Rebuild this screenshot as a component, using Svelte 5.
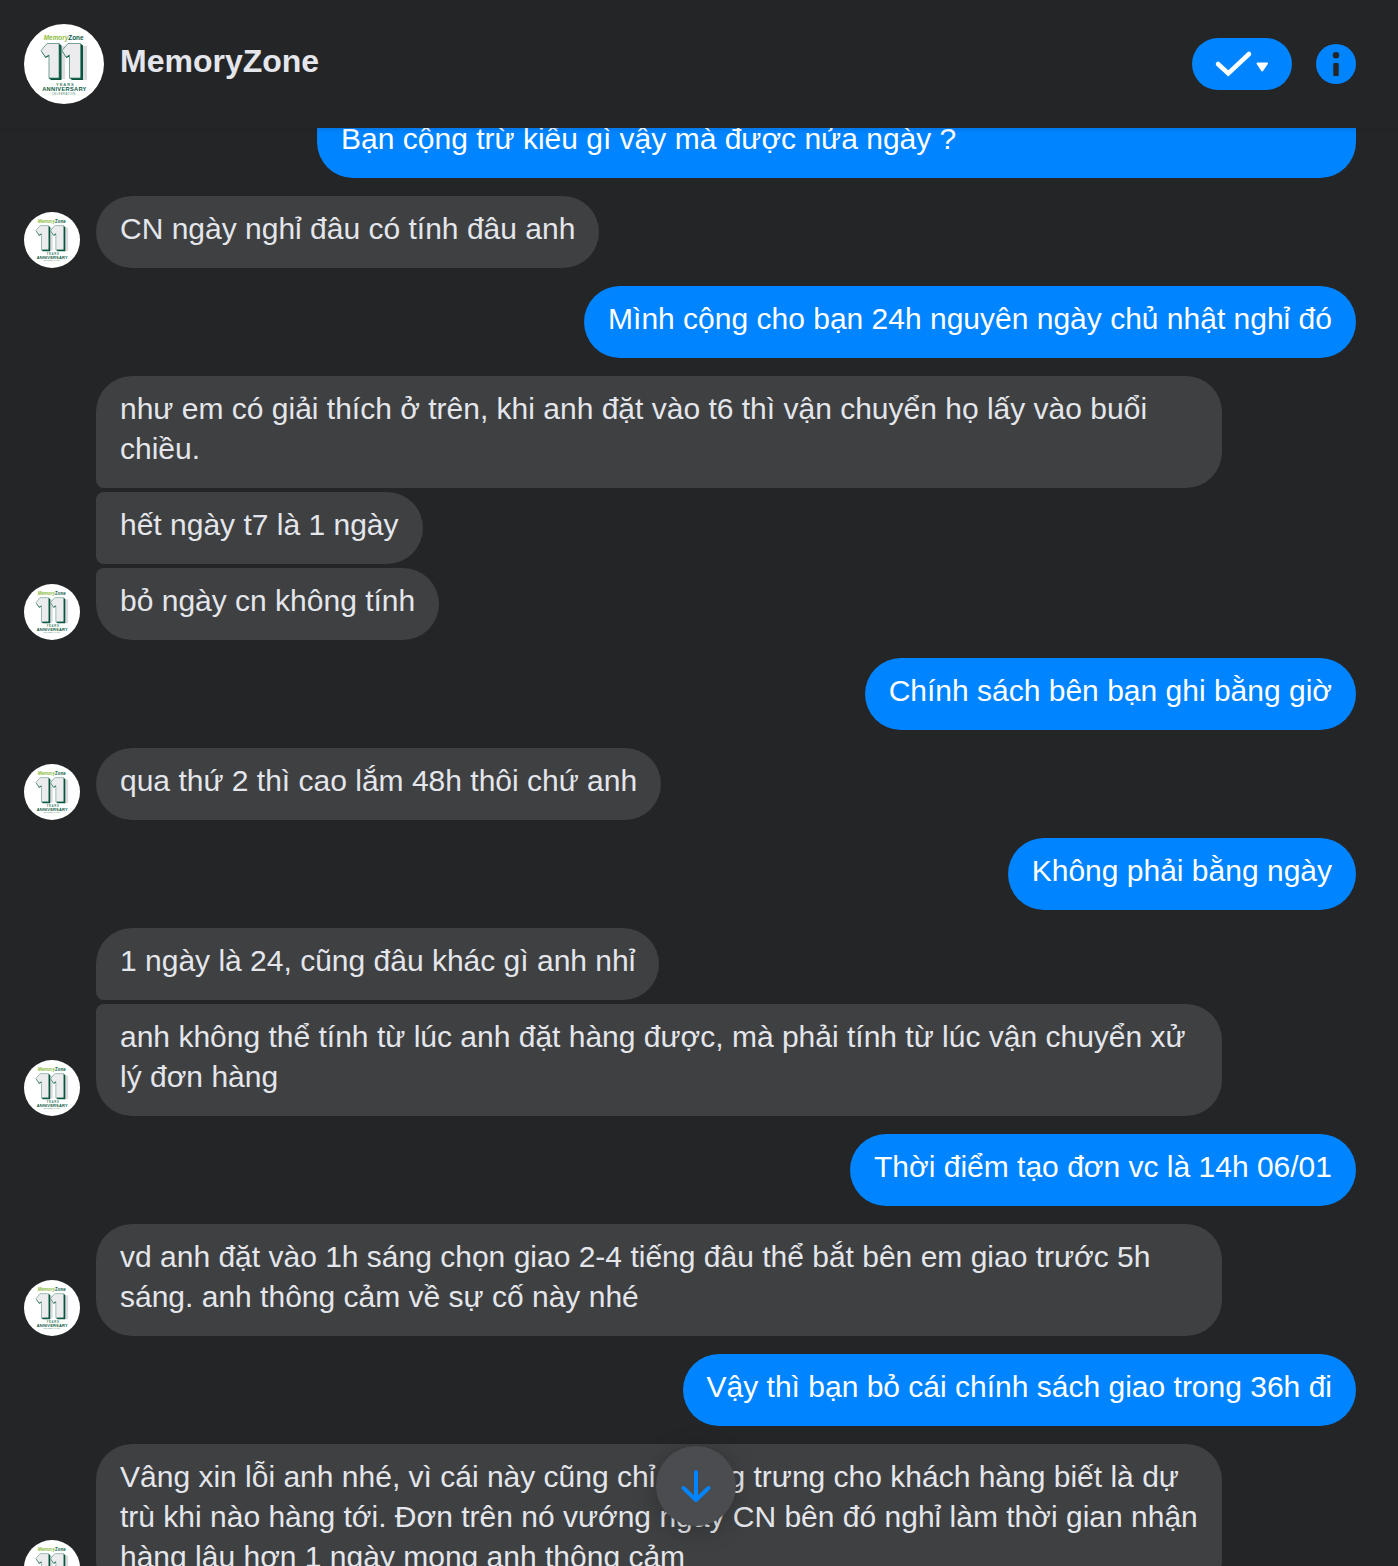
<script>
  const groups = [
    { own: true, items: ["Bạn cộng trừ kiểu gì vậy mà được nửa ngày ?"], continued: true },
    { own: false, items: ["CN ngày nghỉ đâu có tính đâu anh"] },
    { own: true, items: ["Mình cộng cho bạn 24h nguyên ngày chủ nhật nghỉ đó"] },
    {
      own: false,
      items: [
        "như em có giải thích ở trên, khi anh đặt vào t6 thì vận chuyển họ lấy vào buổi chiều.",
        "hết ngày t7 là 1 ngày",
        "bỏ ngày cn không tính",
      ],
    },
    { own: true, items: ["Chính sách bên bạn ghi bằng giờ"] },
    { own: false, items: ["qua thứ 2 thì cao lắm 48h thôi chứ anh"] },
    { own: true, items: ["Không phải bằng ngày"] },
    {
      own: false,
      items: [
        "1 ngày là 24, cũng đâu khác gì anh nhỉ",
        "anh không thể tính từ lúc anh đặt hàng được, mà phải tính từ lúc vận chuyển xử lý đơn hàng",
      ],
    },
    { own: true, items: ["Thời điểm tạo đơn vc là 14h 06/01"] },
    {
      own: false,
      items: ["vd anh đặt vào 1h sáng chọn giao 2-4 tiếng đâu thể bắt bên em giao trước 5h sáng. anh thông cảm về sự cố này nhé"],
    },
    { own: true, items: ["Vậy thì bạn bỏ cái chính sách giao trong 36h đi"] },
    {
      own: false,
      items: ["Vâng xin lỗi anh nhé, vì cái này cũng chỉ tượng trưng cho khách hàng biết là dự trù khi nào hàng tới. Đơn trên nó vướng ngày CN bên đó nghỉ làm thời gian nhận hàng lâu hơn 1 ngày mong anh thông cảm"],
    },
  ];
</script>

{#snippet logo()}
  <svg class="logo" viewBox="0 0 80 80" aria-hidden="true">
    <circle cx="40" cy="40" r="40" fill="#fff" />
    <text x="19.800" y="15.500" font-size="6.400" font-weight="700" font-style="italic" fill="#8bbb3c">Memory<tspan fill="#0b5c47" font-style="normal">Zone</tspan></text>
    <path d="M37 22h4v33h-4zM58 22h5v34h-5z" fill="#dcdcde" />
    <path d="M35 19.500l2.500 2V56H27l-2.500-2 10.500-2zM17 27l4.500 7 4-2-1-2zM56.500 19.500l2.500 2V56H48l-2.500-2 11-2zM38 27l4.500 7 4-2-1-2z" fill="#0a5340" />
    <path d="M23 19.500h12V54H25V31l-3.500 2-4.500-6.500z" fill="#ececee" stroke="#3c7f6b" stroke-width=".7" />
    <path d="M44 19.500h12.500V54h-11V31L42 33l-4-6.500z" fill="#ececee" stroke="#3c7f6b" stroke-width=".7" />
    <text x="32" y="61.500" font-size="4" font-weight="700" letter-spacing="1" fill="#3f7f6b">YEARS</text>
    <text x="18.200" y="67" font-size="5.700" font-weight="700" letter-spacing=".3" fill="#0f5c45">ANNIVERSARY</text>
    <text x="28" y="70.500" font-size="2.600" letter-spacing=".5" fill="#3f7f6b">CELEBRATION</text>
  </svg>
{/snippet}

<div class="chat">
  <header class="head">
    <span class="avatar large">{@render logo()}</span>
    <h1>MemoryZone</h1>
    <button class="done" type="button" aria-label="Mark as done">
      <svg width="56" height="32" viewBox="0 0 56 32" aria-hidden="true">
        <path d="M4 16l10.300 9.500L35 6" fill="none" stroke="#fff" stroke-width="4.500" stroke-linecap="round" />
        <path d="M43.500 15.500h9.500l-4.800 7z" fill="#fff" stroke="#fff" stroke-width="2" stroke-linejoin="round" />
      </svg>
    </button>
    <button class="info" type="button" aria-label="Information">
      <svg width="40" height="40" viewBox="0 0 40 40" aria-hidden="true">
        <circle cx="20" cy="20" r="20" fill="#0084ff" />
        <circle cx="20" cy="11.200" r="3.200" fill="#242526" />
        <rect x="17.300" y="19" width="5.400" height="13" rx="1" fill="#242526" />
      </svg>
    </button>
  </header>

  <main class="messages">
    {#each groups as group}
      <section class="group" class:own={group.own} class:continued={group.continued}>
        {#if !group.own}
          <span class="avatar">{@render logo()}</span>
        {/if}
        <div class="stack">
          {#each group.items as text}
            <p class="bubble">{text}</p>
          {/each}
        </div>
      </section>
    {/each}
  </main>

  <div class="jump">
    <button type="button" aria-label="Scroll to latest">
      <svg width="32" height="36" viewBox="0 0 32 36" aria-hidden="true">
        <path d="M16 4v28M3.500 20L16 32l12.500-12" fill="none" stroke="#0084ff" stroke-width="4" stroke-linecap="round" stroke-linejoin="round" />
      </svg>
    </button>
  </div>
</div>

<style>
  :global(body) { margin: 0; background: #242526; }
  .chat {
    position: relative;
    display: flex;
    flex-direction: column;
    height: 100vh;
    overflow: hidden;
    background: #242526;
    color: #e4e6eb;
    font-family: "Liberation Sans", Arial, sans-serif;
  }
  button { padding: 0; border: 0; cursor: pointer; }
  svg { display: block; }

  .head {
    z-index: 1;
    display: flex;
    flex: none;
    align-items: center;
    box-sizing: border-box;
    height: 128px;
    padding: 0 42px 0 24px;
    background: #242526;
    box-shadow: 0 2px 4px rgba(0, 0, 0, 0.1);
  }
  h1 { flex: 1; margin: 0 16px; padding-bottom: 6px; font-size: 32px; line-height: 40px; }
  .avatar { flex: none; width: 56px; height: 56px; }
  .avatar.large { width: 80px; height: 80px; }
  .logo { width: 100%; height: 100%; }
  .done {
    display: flex;
    align-items: center;
    justify-content: center;
    width: 100px;
    height: 52px;
    margin-right: 24px;
    border-radius: 26px;
    background: #0084ff;
  }
  .info { border-radius: 50%; background: none; }

  .messages {
    display: flex;
    flex: 1;
    flex-direction: column;
    gap: 18px;
    min-height: 0;
    padding: 0 42px 0 24px;
    overflow: hidden;
  }
  .group { display: flex; flex: none; align-items: flex-end; gap: 16px; padding-right: 134px; }
  .stack { display: flex; flex-direction: column; align-items: flex-start; gap: 4px; }
  .bubble {
    margin: 0;
    padding: 13px 24px 19px;
    border-radius: 8px 36px 36px 8px;
    background: #3e4042;
    font-size: 30px;
    line-height: 40px;
  }
  .bubble:first-child { border-top-left-radius: 36px; }
  .bubble:last-child { border-bottom-left-radius: 36px; }
  .own { justify-content: flex-end; padding-right: 0; }
  .own .bubble { border-radius: 36px; background: #0084ff; color: #fff; }
  /* tail of a long message scrolled under the header */
  .continued { margin-top: -22px; }
  .continued .stack { width: 78%; align-items: stretch; }
  .continued .bubble { border-radius: 0 0 36px 36px; }

  .jump {
    position: absolute;
    right: 6px;
    bottom: 40px;
    left: 0;
    display: flex;
    justify-content: center;
    pointer-events: none;
  }
  .jump button {
    display: flex;
    align-items: center;
    justify-content: center;
    width: 80px;
    height: 80px;
    border-radius: 50%;
    background: #4b4c4f;
    box-shadow: 0 4px 24px rgba(0, 0, 0, 0.25);
    pointer-events: auto;
  }
</style>
